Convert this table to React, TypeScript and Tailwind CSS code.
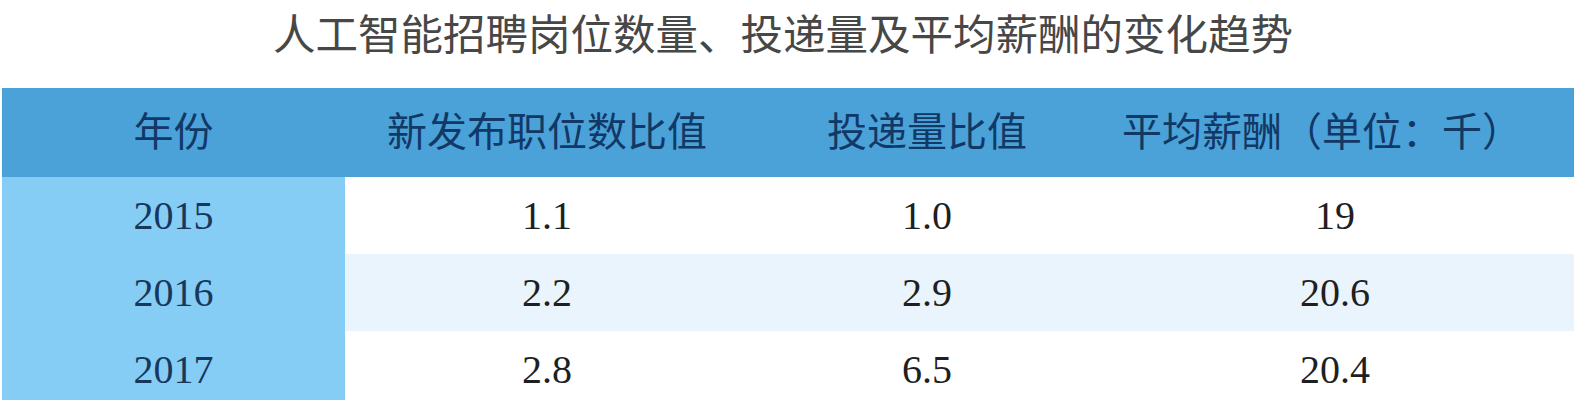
import React from "react";

const rows = [
  ["2015", "1.1", "1.0", "19"],
  ["2016", "2.2", "2.9", "20.6"],
  ["2017", "2.8", "6.5", "20.4"],
];

const headers = ["年份", "新发布职位数比值", "投递量比值", "平均薪酬（单位：千）"];

export default function App() {
  return (
    <div className="w-[1582px] h-[400px] overflow-hidden bg-white">
      <div className="h-[88px] pt-[6px] flex justify-center pr-[16px]">
        <h1
          className="text-[42.5px] leading-[52px] text-[#474747] font-normal"
          style={{ fontFamily: '"Noto Sans CJK SC", "Noto Sans", sans-serif' }}
        >
          人工智能招聘岗位数量、投递量及平均薪酬的变化趋势
        </h1>
      </div>
      <div className="w-[1572px] ml-[2px]">
        <div
          className="grid grid-cols-[343px_404px_356px_452px] h-[89px] items-center bg-[#4aa2d8] text-[#123866] text-[40px]"
          style={{ fontFamily: '"Liberation Serif", "Noto Sans CJK SC", serif' }}
        >
          {headers.map((h, i) => (
            <div key={i} className={"text-center whitespace-nowrap " + (i === 3 ? "pr-[18px]" : "")}>
              {h}
            </div>
          ))}
        </div>
        {rows.map((r, ri) => (
          <div
            key={ri}
            className={
              "grid grid-cols-[343px_404px_356px_452px] h-[77px] items-center text-[40px] " +
              (ri === 1 ? "bg-[#e9f4fd]" : "bg-white")
            }
            style={{ fontFamily: '"Liberation Serif", "Noto Sans CJK SC", serif' }}
          >
            <div className="h-full flex items-center justify-center bg-[#86cdf5] text-[#17385c]">
              {r[0]}
            </div>
            <div className="text-center text-[#1f1f1f]">{r[1]}</div>
            <div className="text-center text-[#1f1f1f]">{r[2]}</div>
            <div className="text-center text-[#1f1f1f] pl-[8px]">{r[3]}</div>
          </div>
        ))}
      </div>
    </div>
  );
}
